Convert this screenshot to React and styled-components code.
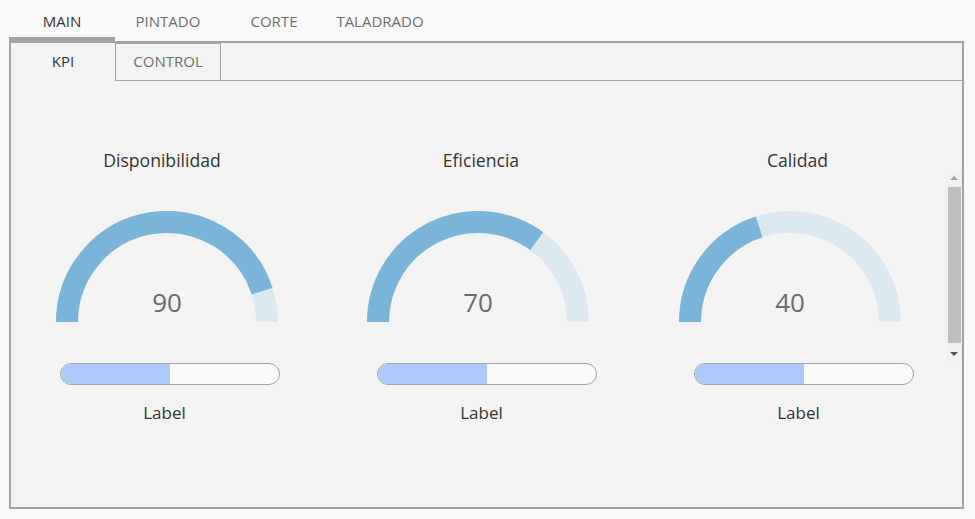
import React from 'react';
import styled, { createGlobalStyle } from 'styled-components';

const GlobalStyle = createGlobalStyle`
  * { box-sizing: border-box; }
  body {
    margin: 0;
    background: #f9f9f9;
    font-family: "Open Sans", "Noto Sans", sans-serif;
    color: #333;
  }
`;

const Page = styled.div`
  width: 975px;
  height: 519px;
  overflow: hidden;
`;

const TopTabs = styled.div`
  display: flex;
  height: 41px;
  padding-left: 9px;
`;

const TopTab = styled.div`
  width: 106px;
  height: 41px;
  line-height: 42px;
  text-align: center;
  font-size: 15px;
  color: ${p => (p.$active ? '#333' : '#6e6e6e')};
  box-shadow: ${p => (p.$active ? 'inset 0 -4px 0 #a3a3a3' : 'none')};
`;

const Panel = styled.div`
  margin: 0 11px 0 9px;
  height: 468px;
  border: 2px solid #a3a3a3;
  background: #f3f3f3;
  display: flex;
  flex-direction: column;
`;

const SubTabs = styled.div`
  display: flex;
  height: 38px;
`;

const SubTab = styled.div`
  width: ${p => (p.$active ? '104px' : '106px')};
  height: 38px;
  line-height: ${p => (p.$active ? '37px' : '35px')};
  text-align: center;
  font-size: 15px;
  color: ${p => (p.$active ? '#333' : '#6e6e6e')};
  border: ${p => (p.$active ? 'none' : '1px solid #a3a3a3')};
`;

const SubTabRest = styled.div`
  flex: 1;
  border-bottom: 1px solid #a3a3a3;
`;

const Content = styled.div`
  flex: 1;
  padding-top: 68px;
`;

const Columns = styled.div`
  display: grid;
  grid-template-columns: repeat(3, 1fr);
`;

const Caption = styled.div`
  font-size: ${p => p.$size}px;
  line-height: 23px;
  text-align: center;
  color: #333;
  padding-right: ${p => p.$shift}px;
`;

const ScrollArea = styled.div`
  display: flex;
  height: 189px;
`;

const GaugeGrid = styled.div`
  flex: 1;
  display: grid;
  grid-template-columns: repeat(3, 1fr);
  padding-top: 39px;
`;

const GaugeCell = styled.div`
  display: flex;
  justify-content: center;
`;

const Scrollbar = styled.div`
  width: 16px;
  margin-top: -2px;
  background: #f0f0f0;
  display: flex;
  flex-direction: column;
  align-items: center;
  padding: 6px 0 5px;
`;

const Arrow = styled.div`
  width: 0;
  height: 0;
  border-left: 4px solid transparent;
  border-right: 4px solid transparent;
  ${p => (p.$down
    ? 'border-top: 4px solid #505050;'
    : 'border-bottom: 4px solid #a3a3a3;')}
`;

const Thumb = styled.div`
  width: 13px;
  flex: 1;
  margin: 7px 0 9px;
  background: #bebebe;
`;

const BarCell = styled.div`
  display: flex;
  justify-content: center;
  padding-top: 2px;
`;

const Bar = styled.div`
  width: 220px;
  height: 22px;
  border: 1px solid #a3a3a3;
  border-radius: 11px;
  background: #fafafa;
  overflow: hidden;
`;

const BarFill = styled.div`
  height: 100%;
  background: #adc9f9;
`;

const Labels = styled(Columns)`
  margin-top: 16px;
`;

function Gauge({ value }) {
  const cx = 112, cy = 111, r = 100;
  const a = Math.PI - Math.PI * (value / 100);
  const ex = cx + r * Math.cos(a);
  const ey = cy - r * Math.sin(a);
  return (
    <svg width="224" height="111" viewBox="0 0 224 111">
      <path d={`M ${cx - r} ${cy} A ${r} ${r} 0 0 1 ${cx + r} ${cy}`} fill="none" stroke="#dbe8f0" strokeWidth="22" />
      <path d={`M ${cx - r} ${cy} A ${r} ${r} 0 0 1 ${ex} ${ey}`} fill="none" stroke="#7ab5d9" strokeWidth="22" />
      <text x={cx} y="101" textAnchor="middle" fontSize="26" fill="#6b6b6b" fontFamily="Open Sans, sans-serif">{value}</text>
    </svg>
  );
}

const kpis = [
  { title: 'Disponibilidad', value: 90, shift: 15 },
  { title: 'Eficiencia', value: 70, shift: 11 },
  { title: 'Calidad', value: 40, shift: 12 },
];

export default function App() {
  return (
    <Page>
      <GlobalStyle />
      <TopTabs>
        <TopTab $active>MAIN</TopTab>
        <TopTab>PINTADO</TopTab>
        <TopTab>CORTE</TopTab>
        <TopTab>TALADRADO</TopTab>
      </TopTabs>
      <Panel>
        <SubTabs>
          <SubTab $active>KPI</SubTab>
          <SubTab>CONTROL</SubTab>
          <SubTabRest />
        </SubTabs>
        <Content>
          <Columns>
            {kpis.map(k => <Caption key={k.title} $size={17.6} $shift={k.shift}>{k.title}</Caption>)}
          </Columns>
          <ScrollArea>
            <GaugeGrid>
              {kpis.map(k => <GaugeCell key={k.title}><Gauge value={k.value} /></GaugeCell>)}
            </GaugeGrid>
            <Scrollbar>
              <Arrow />
              <Thumb />
              <Arrow $down />
            </Scrollbar>
          </ScrollArea>
          <Columns>
            {kpis.map(k => (
              <BarCell key={k.title}>
                <Bar><BarFill style={{ width: '50%' }} /></Bar>
              </BarCell>
            ))}
          </Columns>
          <Labels>
            {kpis.map(k => <Caption key={k.title} $size={17} $shift={10}>Label</Caption>)}
          </Labels>
        </Content>
      </Panel>
    </Page>
  );
}
